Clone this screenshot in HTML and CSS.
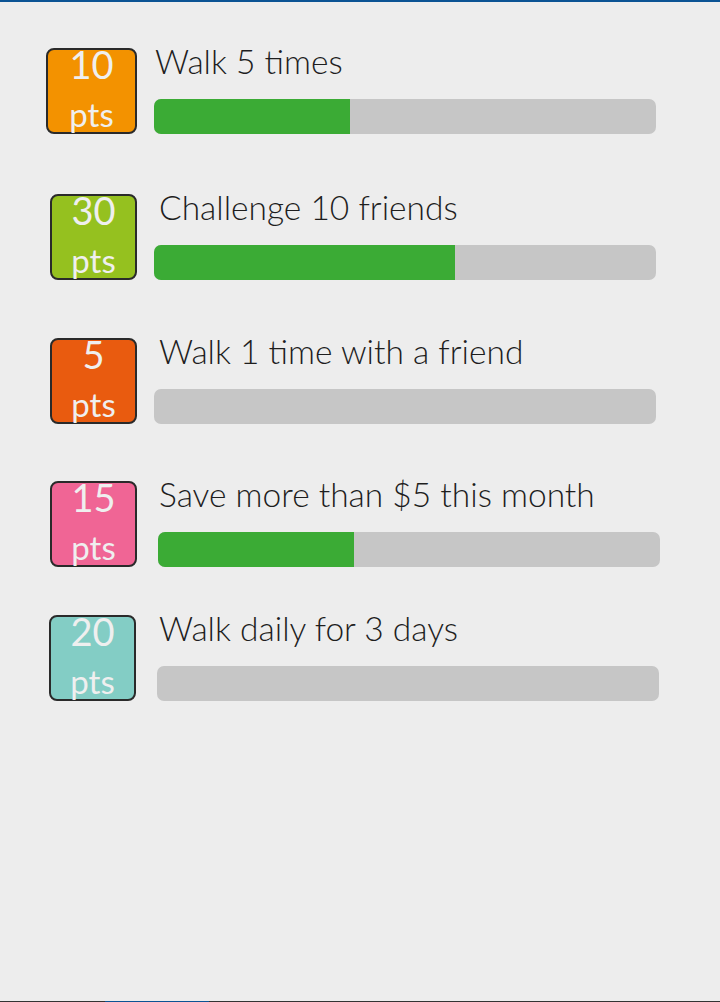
FILE: index.html
```html
<!DOCTYPE html>
<html lang="en">
<head>
<meta charset="utf-8">
<title>Challenges</title>
<link rel="stylesheet" href="styles.css">
</head>
<body>
<div class="screen">
  <div class="topbar"></div>
  <main class="list">
    <div class="row row-1">
      <div class="badge badge-wide orange"><span class="num">10</span><span class="pts">pts</span></div>
      <div class="info">
        <div class="title">Walk 5 times</div>
        <div class="bar"><div class="fill" style="width:39%"></div></div>
      </div>
    </div>
    <div class="row row-2">
      <div class="badge lime"><span class="num">30</span><span class="pts">pts</span></div>
      <div class="info">
        <div class="title">Challenge 10 friends</div>
        <div class="bar"><div class="fill" style="width:60%"></div></div>
      </div>
    </div>
    <div class="row row-3">
      <div class="badge red"><span class="num">5</span><span class="pts">pts</span></div>
      <div class="info">
        <div class="title">Walk 1 time with a friend</div>
        <div class="bar"><div class="fill" style="width:0%"></div></div>
      </div>
    </div>
    <div class="row row-4">
      <div class="badge pink"><span class="num">15</span><span class="pts">pts</span></div>
      <div class="info">
        <div class="title">Save more than $5 this month</div>
        <div class="bar"><div class="fill" style="width:39%"></div></div>
      </div>
    </div>
    <div class="row row-5">
      <div class="badge teal"><span class="num">20</span><span class="pts">pts</span></div>
      <div class="info">
        <div class="title">Walk daily for 3 days</div>
        <div class="bar"><div class="fill" style="width:0%"></div></div>
      </div>
    </div>
  </main>
  <div class="bottombar"><div class="indicator"></div></div>
</div>
</body>
</html>
```
FILE: styles.css
```css
html, body {
  margin: 0;
  padding: 0;
  background: #ededed;
}
.screen {
  height: 1002px;
  display: flex;
  flex-direction: column;
  font-family: "Lato", "Liberation Sans", sans-serif;
}
.topbar {
  height: 2px;
  background: #0b5394;
}
.list {
  flex: 1;
  display: flex;
  flex-direction: column;
}
.row {
  display: flex;
  align-items: flex-end;
}
.row-1 { margin-top: 46px; padding-left: 46px; }
.row-2 { margin-top: 60px; padding-left: 50px; }
.row-3 { margin-top: 58px; padding-left: 50px; }
.row-4 { margin-top: 57px; padding-left: 50px; }
.row-5 { margin-top: 48px; padding-left: 49px; }

.badge {
  box-sizing: border-box;
  flex: none;
  width: 87px;
  height: 86px;
  border: 2px solid #2a2a2a;
  border-radius: 8px;
  display: flex;
  flex-direction: column;
  align-items: center;
  color: #efefef;
  overflow: visible;
}
.badge-wide { width: 91px; }
.num {
  font-size: 38px;
  font-weight: 400;
  line-height: 42px;
  margin-top: -7px;
}
.pts {
  font-size: 33px;
  font-weight: 400;
  line-height: 30px;
  margin-top: 14px;
}
.orange { background: #f39200; }
.lime { background: #95c11f; }
.red { background: #e95b0f; }
.pink { background: #f06595; }
.teal { background: #83cdc5; }

.info {
  display: flex;
  flex-direction: column;
}
.row-1 .info { margin-left: 17px; }
.row-2 .info, .row-3 .info { margin-left: 17px; }
.row-4 .info { margin-left: 21px; }
.row-5 .info { margin-left: 21px; }

.title {
  font-size: 33.5px;
  font-weight: 300;
  color: #1e1e1e;
  line-height: 26px;
  height: 51px;
  white-space: nowrap;
}
.row-1 .title { padding-left: 1px; }
.row-2 .title, .row-3 .title { padding-left: 5px; }
.row-4 .title { padding-left: 1px; }
.row-5 .title { padding-left: 2px; }

.bar {
  width: 502px;
  height: 35px;
  background: #c6c6c6;
  border-radius: 7px;
  overflow: hidden;
}
.fill {
  height: 100%;
  background: #3bab35;
}
.bottombar {
  height: 1px;
  background: #333333;
  display: flex;
}
.indicator {
  margin-left: 105px;
  width: 104px;
  background: #0b5394;
}
```
